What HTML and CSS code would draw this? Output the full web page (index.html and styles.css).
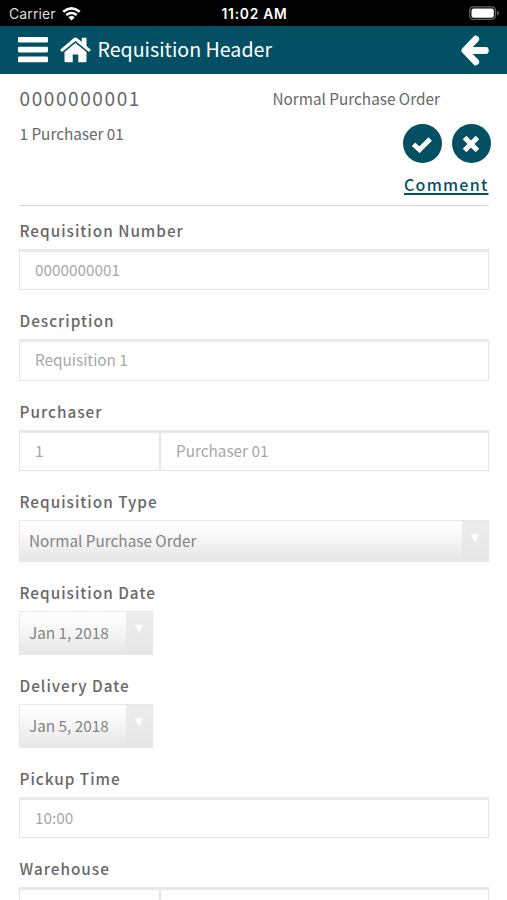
FILE: index.html
```html
<!DOCTYPE html>
<html lang="en">
<head>
<meta charset="utf-8">
<title>Requisition Header</title>
<link rel="stylesheet" href="styles.css">
</head>
<body>
<div class="status">
  <div class="carrier"><span>Carrier</span>
    <svg width="19" height="14" viewBox="0 0 19 14" fill="none" stroke="#fff" stroke-width="2.5"><path d="M1.2 4.7Q9.5-2 17.8 4.7M4.3 8Q9.5 3.9 14.7 8"/><path d="M9.5 13.6 6.3 10.3Q9.5 7.8 12.7 10.3Z" fill="#fff" stroke="none"/></svg>
  </div>
  <div class="clock">11:02 AM</div>
  <div class="power"><svg width="31" height="15" viewBox="0 0 31 15"><rect x=".8" y=".8" width="25.6" height="12.6" rx="3.6" fill="none" stroke="#656565" stroke-width="1.3"/><rect x="2.5" y="2.5" width="22.3" height="9.2" rx="2" fill="#fff"/><path d="M28 4.7Q30 5.5 30 7.1T28 9.5Z" fill="#656565"/></svg></div>
</div>
<header class="bar">
  <svg class="menu" width="30" height="26" viewBox="0 0 30 26" fill="#fff"><rect width="30" height="5.6" rx="1.3"/><rect y="9.8" width="30" height="5.6" rx="1.3"/><rect y="19.6" width="30" height="5.6" rx="1.3"/></svg>
  <svg class="home" width="31" height="26" viewBox="0 0 31 26" fill="#fff"><path d="M15.5 6 26.5 15V24q0 1.3-1.3 1.3H18.3V17.5H12.7V25.3H5.8Q4.5 25.3 4.5 24V15Z"/><path d="M.5 12.5 13.6 1.3Q15.5-.1 17.4 1.3L21.8 5V1.5Q21.8.8 22.5.8H25.8Q26.5.8 26.5 1.5V9L30.5 12.5Q30.9 13 30.5 13.5L29.5 14.6Q29 15 28.4 14.6L15.5 3.9 2.6 14.6Q2 15 1.5 14.6L.5 13.5Q.1 13 .5 12.5Z"/></svg>
  <h1>Requisition Header</h1>
  <svg class="back" width="30" height="31" viewBox="0 0 30 31" fill="none" stroke="#fff" stroke-width="6.6" stroke-linecap="round" stroke-linejoin="round"><path d="M15.8 4.1 4.8 15.5 15.8 26.9M6 15.5H25.5"/><path d="M6 15.5H27.5" stroke-linecap="butt"/></svg>
</header>
<main>
  <section class="summary">
    <div class="line top"><span class="number">0000000001</span><span class="type">Normal Purchase Order</span></div>
    <div class="line mid"><span class="buyer">1 Purchaser 01</span>
      <div class="actions">
        <span class="round"><svg width="22" height="18" viewBox="0 0 22 18"><path d="M2.5 9.3 8.5 14.7 19.2 4" fill="none" stroke="#fff" stroke-width="4.9"/></svg></span>
        <span class="round"><svg width="18" height="18" viewBox="0 0 18 18"><path d="M4.3 4.3 13.7 13.7M13.7 4.3 4.3 13.7" fill="none" stroke="#fff" stroke-width="5" stroke-linecap="square"/></svg></span>
      </div>
    </div>
    <div class="comment"><a>Comment</a></div>
  </section>
  <form>
    <div class="field"><label>Requisition Number</label><div class="box"><span>0000000001</span></div></div>
    <div class="field"><label>Description</label><div class="box"><span>Requisition 1</span></div></div>
    <div class="field"><label>Purchaser</label><div class="box pair"><span>1</span><span>Purchaser 01</span></div></div>
    <div class="field"><label>Requisition Type</label><div class="select"><span>Normal Purchase Order</span><i><svg width="8" height="8" viewBox="0 0 9 9"><path d="M0 0H9L4.5 9Z" fill="#fff"/></svg></i></div></div>
    <div class="field"><label>Requisition Date</label><div class="select date"><span>Jan 1, 2018</span><i><svg width="8" height="8" viewBox="0 0 9 9"><path d="M0 0H9L4.5 9Z" fill="#fff"/></svg></i></div></div>
    <div class="field"><label>Delivery Date</label><div class="select date"><span>Jan 5, 2018</span><i><svg width="8" height="8" viewBox="0 0 9 9"><path d="M0 0H9L4.5 9Z" fill="#fff"/></svg></i></div></div>
    <div class="field"><label>Pickup Time</label><div class="box"><span>10:00</span></div></div>
    <div class="field"><label>Warehouse</label><div class="box pair"><span></span><span></span></div></div>
  </form>
</main>
</body>
</html>
```
FILE: styles.css
```css
* { box-sizing: border-box; }
html, body { height: 100%; overflow: hidden; }
body { margin: 0; background: #fff; color: #686868; font-family: "Noto Sans CJK SC", "Noto Sans", sans-serif; font-size: 15.3px; }
svg { display: block; flex: none; }
.status { height: 26px; background: #000; color: #fff; display: grid; grid-template-columns: 1fr auto 1fr; align-items: center; padding: 0 7px 0 9px; font: 14px/26px Inter, sans-serif; }
.carrier { display: flex; align-items: center; gap: 6px; color: #ddd; letter-spacing: .1px; }
.clock { font-weight: 600; font-size: 13.8px; letter-spacing: .75px; padding-top: 1px; }
.power { display: flex; justify-content: flex-end; }
.bar { height: 48px; background: #035064; display: flex; align-items: center; padding: 0 17px 0 18px; color: #fff; }
.home { margin-left: 12px; }
h1 { margin: 0 auto 0 6.5px; font-size: 19.6px; font-weight: 400; line-height: 46px; height: 48px; white-space: nowrap; }
main { padding: 0 18.5px 0 19px; }
.summary { height: 132px; border-bottom: 1.5px solid #d4d4d4; }
.line { display: flex; white-space: nowrap; }
.top { height: 50px; line-height: 48px; }
.number { width: 253.5px; font-size: 19px; letter-spacing: 1.6px; padding-left: .5px; }
.mid { height: 46px; justify-content: space-between; }
.buyer { line-height: 19px; padding-left: .5px; }
.actions { display: flex; gap: 10px; margin-right: -2px; }
.round { width: 39px; height: 39px; border-radius: 50%; background: #035064; display: flex; align-items: center; justify-content: center; }
.comment { text-align: right; line-height: 28px; }
.comment a { color: #035064; font-size: 16px; font-weight: 500; letter-spacing: 1.25px; text-decoration: underline; text-decoration-thickness: 1.5px; text-underline-offset: 2px; }
form { padding-top: 7px; }
.field { margin-bottom: 13px; }
label { display: block; height: 36px; line-height: 34.4px; padding-left: .5px; font-weight: 500; letter-spacing: 1px; }
.box { height: 41.4px; border: 1.5px solid #e5e5e5; border-top: 3px solid #e9e9e9; color: #a8a8a8; display: flex; line-height: 35px; }
.box span { padding-left: 15px; }
.pair span:first-child { width: 141px; border-right: 2px solid #e5e5e5; }
.select { height: 41.4px; border: 1.5px solid #e8e8e8; background: linear-gradient(#fff, #fafafa 30%, #e6e6e6); color: #848484; display: flex; justify-content: space-between; align-items: center; }
.select span { padding-left: 9px; margin-top: -2px; }
.select i { align-self: stretch; width: 26px; background: linear-gradient(#ededed, #e6e6e6); display: flex; justify-content: center; padding-top: 13px; }
.date { width: 134px; height: 44px; }
```
